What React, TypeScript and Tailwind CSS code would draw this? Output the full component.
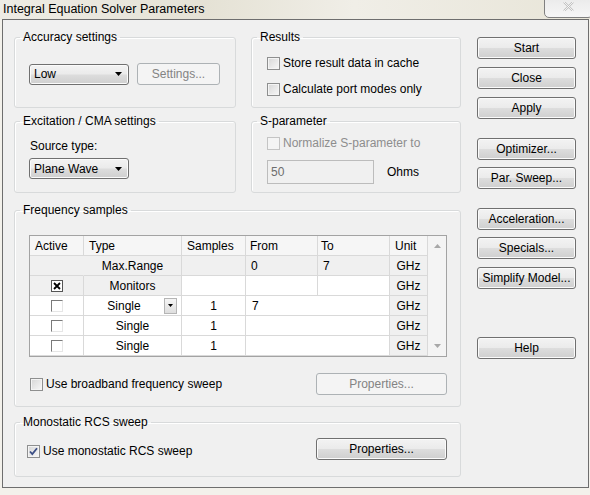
import type { ReactNode } from "react";

const btnFace =
  "bg-[linear-gradient(#f3f3f3,#ebebeb_48%,#dddddd_52%,#cfcfcf)] border border-[#707070] shadow-[inset_0_0_0_1px_#fbfbfb]";

function Button({
  children,
  className = "",
  disabled = false,
}: {
  children: ReactNode;
  className?: string;
  disabled?: boolean;
}) {
  return (
    <div
      className={`flex h-[22px] items-center justify-center rounded-[3px] ${
        disabled
          ? "border border-[#adb2b5] bg-[#f4f4f4] text-[#838383]"
          : btnFace
      } ${className}`}
    >
      {children}
    </div>
  );
}

function Combo({ label }: { label: string }) {
  return (
    <div
      className={`flex h-[21px] w-[100px] items-center justify-between rounded-[3px] pl-[4px] pr-[6px] ${btnFace}`}
    >
      <span>{label}</span>
      <svg width="7" height="4" viewBox="0 0 7 4">
        <path d="M0 0h7L3.5 4z" fill="#000" />
      </svg>
    </div>
  );
}

function Check({
  checked = false,
  disabled = false,
}: {
  checked?: boolean;
  disabled?: boolean;
}) {
  return (
    <div
      className={`flex h-[13px] w-[13px] shrink-0 items-center justify-center border ${
        disabled
          ? "border-[#c4c4c4] bg-[#f4f4f4]"
          : "border-[#8e8f8f] bg-[linear-gradient(135deg,#d6d6d6,#f8f8f8)] shadow-[inset_0_0_0_1px_#f4f4f4]"
      }`}
    >
      {checked && (
        <svg width="9" height="9" viewBox="0 0 9 9">
          <path
            d="M1 4.5l2.3 2.6L8 1.2"
            stroke="#3c4f86"
            strokeWidth="1.8"
            fill="none"
          />
        </svg>
      )}
    </div>
  );
}

function ClassicCheck({ checked = false }: { checked?: boolean }) {
  return (
    <div
      className={`flex h-[12px] w-[12px] items-center justify-center border ${
        checked
          ? "border-[#555]"
          : "border-t-[#7a7a7a] border-l-[#7a7a7a] border-r-[#e6e6e6] border-b-[#e6e6e6]"
      } bg-white`}
    >
      {checked && (
        <svg width="8" height="8" viewBox="0 0 8 8">
          <path d="M1 1l6 6M7 1L1 7" stroke="#000" strokeWidth="1.8" />
        </svg>
      )}
    </div>
  );
}

function Group({
  title,
  className = "",
  children,
}: {
  title: string;
  className?: string;
  children: ReactNode;
}) {
  return (
    <fieldset
      className={`rounded-[3px] border border-[#d8dadb] shadow-[inset_1px_1px_0_#fff] ${className}`}
    >
      <legend className="ml-[5px] px-[3px] leading-[15px]">{title}</legend>
      {children}
    </fieldset>
  );
}

const cell = "flex items-center border-r border-b border-[#d9d9d9]";

export default function App() {
  return (
    <div className="relative h-[495px] w-[590px] overflow-hidden bg-[#f3f1eb] font-['Liberation_Sans',Arial,sans-serif] text-[12px] text-black">
      {/* title bar */}
      <div className="flex h-[19px] items-center bg-[linear-gradient(90deg,#eeece5,#e5e2d5_35%,#f0eee7_60%,#e8e5d8)] pl-[3px] text-[12.5px]">
        Integral Equation Solver Parameters
      </div>
      <div className="absolute right-[-3px] top-[-5px] flex h-[23px] w-[49px] items-end justify-center rounded-b-[5px] border border-[#808080] bg-[linear-gradient(#e9e9e9,#f6f6f6)] pb-[6px]">
        <svg width="11" height="9" viewBox="0 0 11 9">
          <path d="M1 0l9 9M10 0L1 9" stroke="#bdbdbd" strokeWidth="2" />
          <path d="M1 0l9 9M10 0L1 9" stroke="#fff" strokeWidth="0.8" />
        </svg>
      </div>

      {/* dialog client */}
      <div className="ml-[2px] flex h-[469px] w-[587px] border border-[#6e6e6e] bg-[#f0f0f0]">
        <div className="flex w-[458px] flex-col pl-[11px] pt-[10px]">
          <div className="flex">
            <Group title="Accuracy settings" className="h-[78px] w-[222px]">
              <div className="flex items-center pl-[14px] pt-[18px]">
                <Combo label="Low" />
                <Button disabled className="ml-[8px] w-[83px]">
                  Settings...
                </Button>
              </div>
            </Group>
            <Group title="Results" className="ml-[15px] h-[78px] w-[210px]">
              <div className="flex flex-col gap-[6px] pl-[15px] pt-[8px]">
                <div className="flex h-[20px] items-center gap-[3px]">
                  <Check />
                  <span>Store result data in cache</span>
                </div>
                <div className="flex h-[20px] items-center gap-[3px]">
                  <Check />
                  <span>Calculate port modes only</span>
                </div>
              </div>
            </Group>
          </div>

          <div className="mt-[6px] flex">
            <Group
              title="Excitation / CMA settings"
              className="h-[79px] w-[222px]"
            >
              <div className="flex flex-col pl-[14px] pt-[10px]">
                <span className="ml-[1px] leading-[15px]">Source type:</span>
                <div className="mt-[4px]">
                  <Combo label="Plane Wave" />
                </div>
              </div>
            </Group>
            <Group title="S-parameter" className="ml-[15px] h-[79px] w-[210px]">
              <div className="flex flex-col pl-[15px] pt-[4px]">
                <div className="flex h-[20px] items-center gap-[3px] text-[#8d8d8d]">
                  <Check disabled />
                  <span>Normalize S-parameter to</span>
                </div>
                <div className="mt-[7px] flex items-center">
                  <div className="flex h-[24px] w-[107px] items-center border border-[#bcbcbc] bg-[#f0f0f0] pl-[3px] text-[#6d6d6d]">
                    50
                  </div>
                  <span className="ml-[13px]">Ohms</span>
                </div>
              </div>
            </Group>
          </div>

          <Group
            title="Frequency samples"
            className="mt-[10px] h-[204px] w-[447px]"
          >
            <div className="flex flex-col pl-[14px] pt-[17px]">
              <div className="flex w-[418px] border border-[#a3a3a3] bg-white">
                <div className="grid w-[398px] grid-cols-[54px_98px_64px_72px_72px_38px] grid-rows-[20px_20px_20px_20px_20px_20px]">
                  {/* header */}
                  <div className={`${cell} bg-[#f6f6f6] pl-[5px]`}>Active</div>
                  <div className={`${cell} bg-[#f6f6f6] pl-[5px]`}>Type</div>
                  <div className={`${cell} bg-[#f6f6f6] pl-[5px]`}>Samples</div>
                  <div className={`${cell} bg-[#f6f6f6] pl-[4px]`}>From</div>
                  <div className={`${cell} bg-[#f6f6f6] pl-[3px]`}>To</div>
                  <div className={`${cell} bg-[#f6f6f6] pl-[5px]`}>Unit</div>

                  {/* Max.Range */}
                  <div className={`${cell} bg-[#f0f0f0] border-r-[#f0f0f0]`} />
                  <div className={`${cell} justify-center bg-[#f0f0f0]`}>
                    Max.Range
                  </div>
                  <div className={`${cell} bg-[#f0f0f0]`} />
                  <div className={`${cell} bg-[#f0f0f0] pl-[5px]`}>0</div>
                  <div className={`${cell} bg-[#f0f0f0] pl-[5px]`}>7</div>
                  <div className={`${cell} justify-center bg-[#f0f0f0]`}>GHz</div>

                  {/* Monitors */}
                  <div className={`${cell} justify-center bg-[#f0f0f0]`}>
                    <ClassicCheck checked />
                  </div>
                  <div className={`${cell} justify-center bg-[#f0f0f0]`}>
                    Monitors
                  </div>
                  <div className={cell} />
                  <div className={cell} />
                  <div className={cell} />
                  <div className={`${cell} justify-center bg-[#f0f0f0]`}>GHz</div>

                  {/* Single with dropdown */}
                  <div className={`${cell} justify-center`}>
                    <ClassicCheck />
                  </div>
                  <div className={`${cell} pr-[4px]`}>
                    <span className="flex-1 text-center">Single</span>
                    <div className="flex h-[16px] w-[13px] items-center justify-center border border-[#b5b5b5] bg-[linear-gradient(#f5f5f5,#dedede)]">
                      <svg width="5" height="3" viewBox="0 0 5 3">
                        <path d="M0 0h5L2.5 3z" fill="#000" />
                      </svg>
                    </div>
                  </div>
                  <div className={`${cell} justify-center`}>1</div>
                  <div className={`${cell} col-span-2 pl-[6px]`}>7</div>
                  <div className={`${cell} justify-center bg-[#f0f0f0]`}>GHz</div>

                  {/* Single rows */}
                  {[0, 1].map((i) => (
                    <div key={i} className="contents">
                      <div className={`${cell} justify-center`}>
                        <ClassicCheck />
                      </div>
                      <div className={`${cell} justify-center`}>Single</div>
                      <div className={`${cell} justify-center`}>1</div>
                      <div className={`${cell} col-span-2`} />
                      <div className={`${cell} justify-center bg-[#f0f0f0]`}>
                        GHz
                      </div>
                    </div>
                  ))}
                </div>
                {/* scrollbar */}
                <div className="flex w-[18px] flex-col items-center justify-between bg-[#f4f4f4] py-[8px]">
                  <svg width="7" height="4" viewBox="0 0 7 4">
                    <path d="M0 4h7L3.5 0z" fill="#a8a8a8" />
                  </svg>
                  <svg width="7" height="4" viewBox="0 0 7 4">
                    <path d="M0 0h7L3.5 4z" fill="#a8a8a8" />
                  </svg>
                </div>
              </div>

              <div className="mt-[16px] flex w-[418px] items-center justify-between">
                <div className="ml-[1px] flex items-center gap-[3px]">
                  <Check />
                  <span>Use broadband frequency sweep</span>
                </div>
                <Button disabled className="w-[131px]">
                  Properties...
                </Button>
              </div>
            </div>
          </Group>

          <Group
            title="Monostatic RCS sweep"
            className="mt-[8px] h-[62px] w-[447px]"
          >
            <div className="flex w-[432px] items-center justify-between pl-[12px] pt-[8px]">
              <div className="mt-[4px] flex items-center gap-[3px]">
                <Check checked />
                <span>Use monostatic RCS sweep</span>
              </div>
              <Button className="w-[131px]">Properties...</Button>
            </div>
          </Group>
        </div>

        <div className="ml-[16px] flex w-[99px] flex-col pt-[17px]">
          <Button>Start</Button>
          <Button className="mt-[8px]">Close</Button>
          <Button className="mt-[8px]">Apply</Button>
          <Button className="mt-[19px]">Optimizer...</Button>
          <Button className="mt-[7px]">Par. Sweep...</Button>
          <Button className="mt-[19px]">Acceleration...</Button>
          <Button className="mt-[7px]">Specials...</Button>
          <Button className="mt-[8px]">Simplify Model...</Button>
          <Button className="mt-[48px]">Help</Button>
        </div>
      </div>
    </div>
  );
}
